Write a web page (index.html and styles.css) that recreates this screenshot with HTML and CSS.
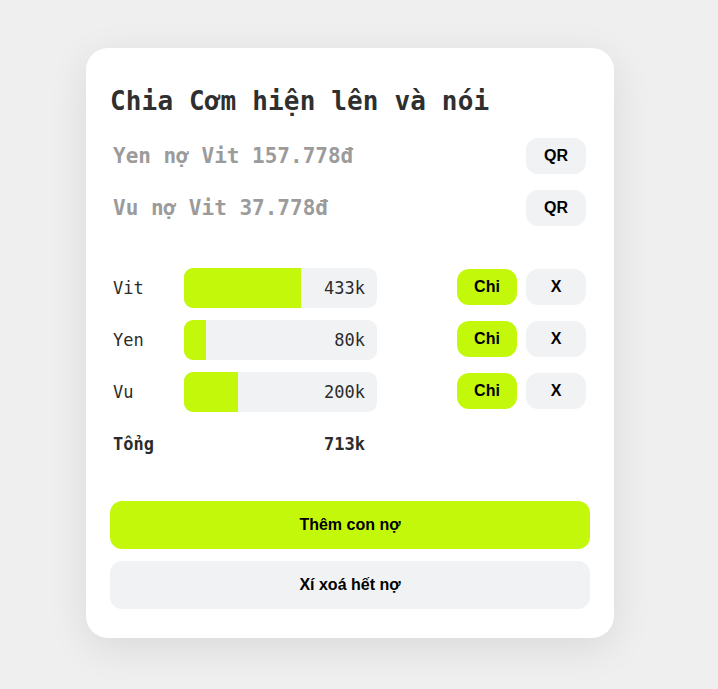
FILE: index.html
```html
<!DOCTYPE html>
<html lang="vi">
<head>
<meta charset="utf-8">
<title>Chia Cơm</title>
<link rel="stylesheet" href="styles.css">
</head>
<body>
<main class="card">
  <h1 class="title">Chia Cơm hiện lên và nói</h1>
  <section class="debts">
    <div class="debt-row">
      <span class="debt-text">Yen nợ Vit 157.778đ</span>
      <button class="btn btn-gray btn-small">QR</button>
    </div>
    <div class="debt-row">
      <span class="debt-text">Vu nợ Vit 37.778đ</span>
      <button class="btn btn-gray btn-small">QR</button>
    </div>
  </section>
  <section class="players">
    <div class="player-row">
      <span class="name">Vit</span>
      <div class="bar"><div class="fill" style="width:60.7%"></div><span class="value">433k</span></div>
      <div class="actions">
        <button class="btn btn-lime btn-small">Chi</button>
        <button class="btn btn-gray btn-small">X</button>
      </div>
    </div>
    <div class="player-row">
      <span class="name">Yen</span>
      <div class="bar"><div class="fill" style="width:11.2%"></div><span class="value">80k</span></div>
      <div class="actions">
        <button class="btn btn-lime btn-small">Chi</button>
        <button class="btn btn-gray btn-small">X</button>
      </div>
    </div>
    <div class="player-row">
      <span class="name">Vu</span>
      <div class="bar"><div class="fill" style="width:28%"></div><span class="value">200k</span></div>
      <div class="actions">
        <button class="btn btn-lime btn-small">Chi</button>
        <button class="btn btn-gray btn-small">X</button>
      </div>
    </div>
    <div class="player-row total-row">
      <span class="name total">Tổng</span>
      <div class="total-box"><span class="value total">713k</span></div>
    </div>
  </section>
  <section class="main-actions">
    <button class="btn btn-lime btn-big">Thêm con nợ</button>
    <button class="btn btn-gray btn-big">Xí xoá hết nợ</button>
  </section>
</main>
</body>
</html>
```

FILE: styles.css
```css
* { box-sizing: border-box; }
html, body { margin: 0; padding: 0; }
body {
  background: #efefef;
  min-height: 689px;
  padding: 48px 0 0 86px;
  font-family: "DejaVu Sans Mono", monospace;
}
.card {
  width: 528px;
  height: 590px;
  background: #ffffff;
  border-radius: 22px;
  box-shadow: 0 10px 40px rgba(0, 0, 0, 0.09);
  padding: 38px 24px 29px 24px;
  display: flex;
  flex-direction: column;
}
.title {
  margin: 0;
  font-size: 26px;
  line-height: 31px;
  font-weight: bold;
  color: #2f2f2f;
  letter-spacing: 0.15px;
}
.debts {
  margin-top: 21px;
  display: flex;
  flex-direction: column;
  gap: 16px;
}
.debt-row {
  display: flex;
  align-items: center;
  justify-content: space-between;
  padding: 0 4px 0 3px;
  height: 36px;
}
.debt-text {
  font-size: 21px;
  font-weight: bold;
  color: #9b9b9b;
}
.btn {
  border: none;
  font-family: "Liberation Sans", Arial, sans-serif;
  font-weight: bold;
  color: #000;
  cursor: pointer;
  padding: 0;
}
.btn-gray { background: #f1f2f4; }
.btn-lime { background: #c4f80b; }
.btn-small {
  width: 60px;
  height: 36px;
  border-radius: 12px;
  font-size: 16px;
  line-height: 36px;
}
.players {
  margin-top: 42px;
  display: flex;
  flex-direction: column;
  gap: 12px;
}
.player-row {
  display: flex;
  align-items: center;
  height: 40px;
  padding: 0 4px 0 3px;
}
.name {
  width: 71px;
  font-size: 17px;
  color: #2b2b2b;
}
.bar {
  position: relative;
  width: 193px;
  height: 40px;
  background: #f1f2f4;
  border-radius: 9px;
  overflow: hidden;
  display: flex;
  align-items: center;
  justify-content: flex-end;
  padding-right: 12px;
}
.fill {
  position: absolute;
  left: 0;
  top: 0;
  bottom: 0;
  background: #c4f80b;
}
.value {
  position: relative;
  font-size: 17px;
  color: #2b2b2b;
}
.total { font-weight: bold; }
.total-box {
  width: 193px;
  display: flex;
  justify-content: flex-end;
  padding-right: 12px;
}
.actions {
  margin-left: auto;
  align-self: flex-start;
  margin-top: 1px;
  display: flex;
  gap: 9px;
}
.main-actions {
  margin-top: 37px;
  display: flex;
  flex-direction: column;
  gap: 12px;
}
.btn-big {
  width: 100%;
  height: 48px;
  border-radius: 12px;
  font-size: 16px;
}
```
